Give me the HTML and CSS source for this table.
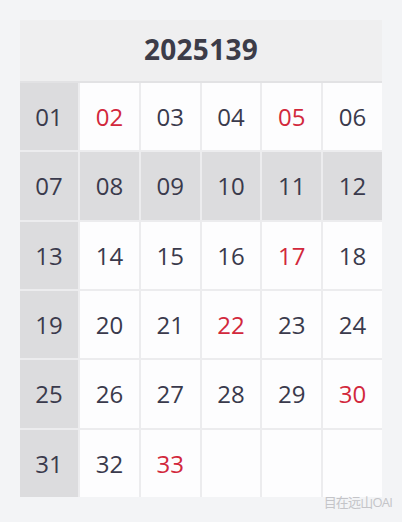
FILE: index.html
```html
<!DOCTYPE html>
<html lang="zh">
<head>
<meta charset="utf-8">
<link rel="stylesheet" href="styles.css">
</head>
<body>
<div class="page">
  <div class="card">
    <div class="title">2025139</div>
    <div class="grid">
      <div class="cell g">01</div><div class="cell r">02</div><div class="cell">03</div><div class="cell">04</div><div class="cell r">05</div><div class="cell">06</div>
      <div class="cell g">07</div><div class="cell g">08</div><div class="cell g">09</div><div class="cell g">10</div><div class="cell g">11</div><div class="cell g">12</div>
      <div class="cell g">13</div><div class="cell">14</div><div class="cell">15</div><div class="cell">16</div><div class="cell r">17</div><div class="cell">18</div>
      <div class="cell g">19</div><div class="cell">20</div><div class="cell">21</div><div class="cell r">22</div><div class="cell">23</div><div class="cell">24</div>
      <div class="cell g">25</div><div class="cell">26</div><div class="cell">27</div><div class="cell">28</div><div class="cell">29</div><div class="cell r">30</div>
      <div class="cell g">31</div><div class="cell">32</div><div class="cell r">33</div><div class="cell"></div><div class="cell"></div><div class="cell"></div>
    </div>
  </div>
  <div class="mark">目在远山OAI</div>
</div>
</body>
</html>
```

FILE: styles.css
```css
html, body {
  margin: 0;
  padding: 0;
}
body {
  background: #f9f9fa;
  font-family: "Open Sans", "Noto Sans", "Noto Sans CJK SC", sans-serif;
}
.page {
  width: 402px;
  height: 522px;
  box-sizing: border-box;
  padding: 20px 20px 0 20px;
  background: #f3f4f6;
  position: relative;
}
.card {
  width: 362px;
  background: #eaeaec;
}
.title {
  height: 63px;
  background: #efeff0;
  border-bottom: 2px solid #e2e2e4;
  display: flex;
  align-items: center;
  justify-content: center;
  font-weight: 700;
  font-size: 28px;
  color: #3c3c48;
  letter-spacing: 0.3px;
  padding-bottom: 3px;
  box-sizing: border-box;
}
.grid {
  display: grid;
  grid-template-columns: 58px repeat(5, 1fr);
  grid-auto-rows: 67.33px;
  gap: 2px;
  background: #ececee;
}
.cell {
  background: #fdfdfe;
  display: flex;
  align-items: center;
  justify-content: center;
  font-size: 24px;
  color: #3a3a4c;
}
.cell.g {
  background: #dcdcde;
}
.cell.r {
  color: #d2283c;
}
.mark {
  position: absolute;
  right: 10px;
  bottom: 11px;
  font-size: 13px;
  color: #c4c4c8;
  letter-spacing: -0.8px;
}
```
